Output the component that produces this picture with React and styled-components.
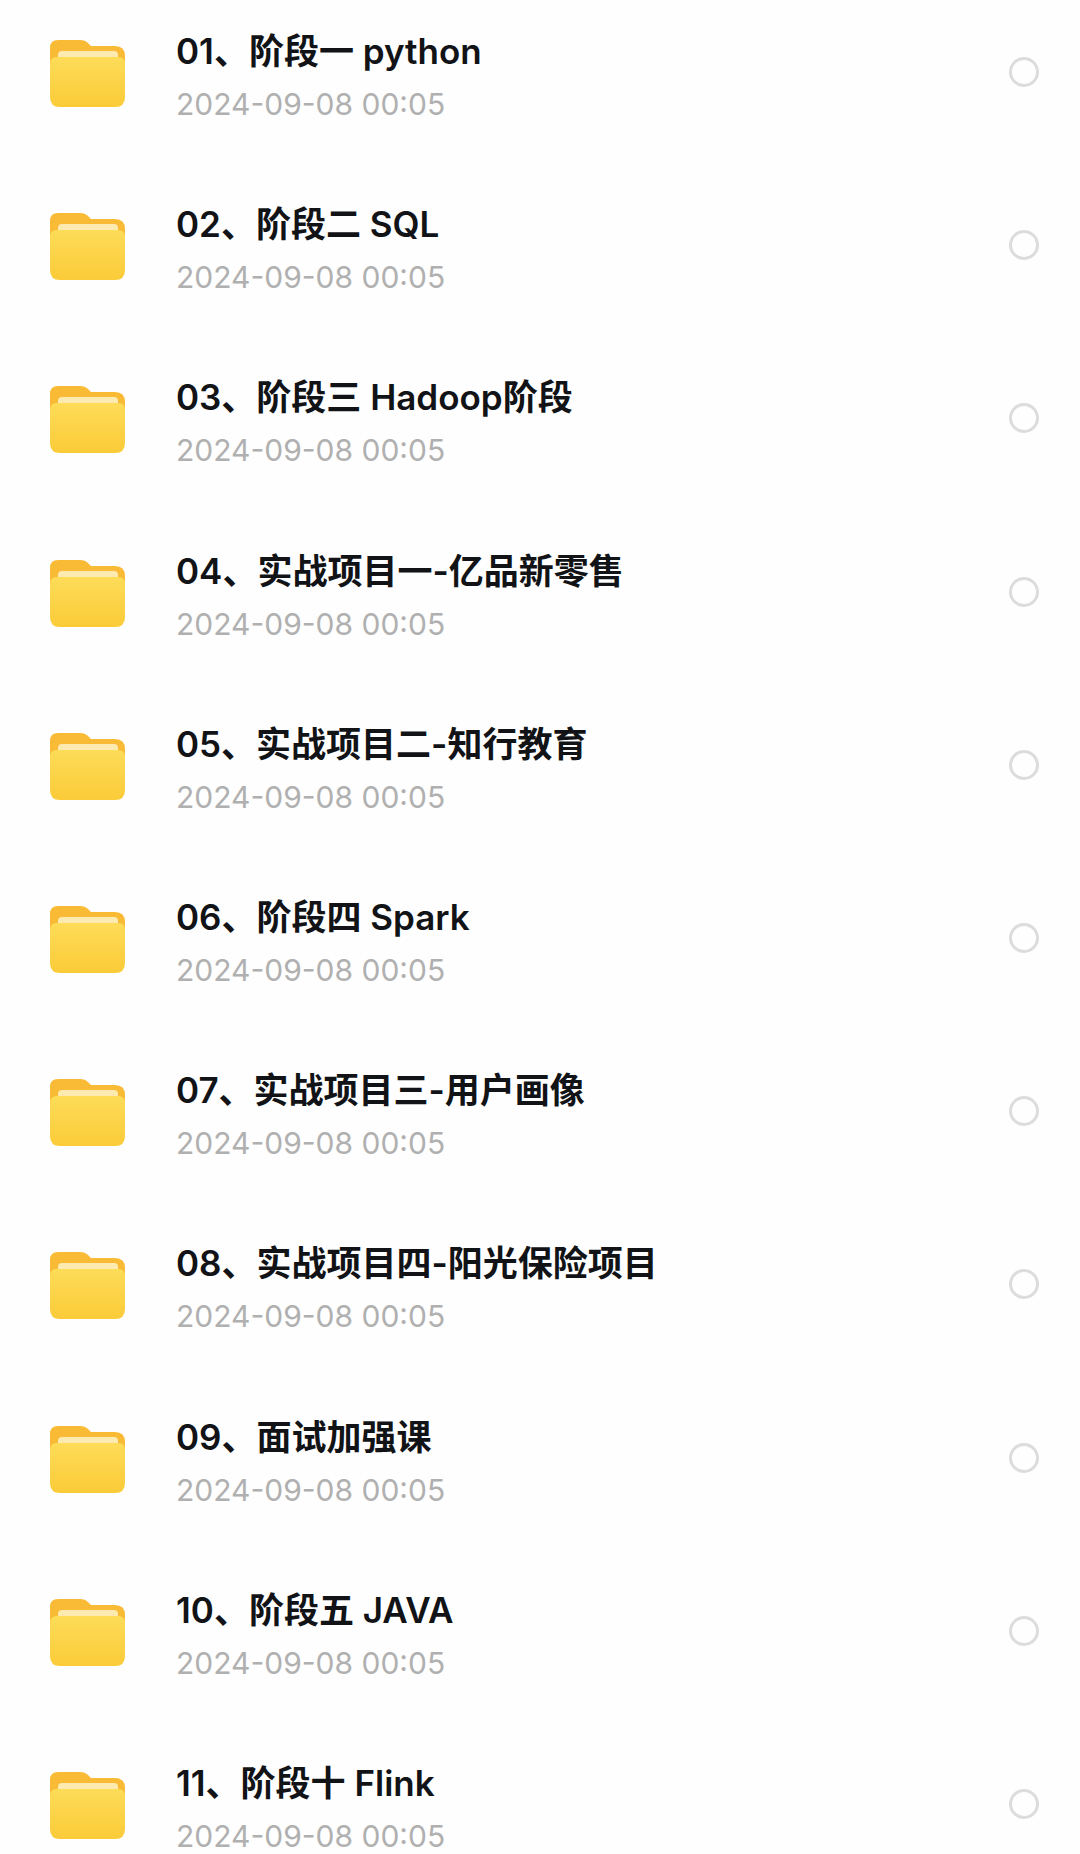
import React from 'react';
import styled, { createGlobalStyle } from 'styled-components';

const GlobalStyle = createGlobalStyle`
  html, body {
    margin: 0;
    padding: 0;
    background: #ffffff;
  }
  body {
    font-family: "Inter", "Noto Sans CJK SC", sans-serif;
    overflow: hidden;
  }
`;

const List = styled.div`
  width: 1080px;
  height: 1854px;
  overflow: hidden;
  background: #fefefe;
`;

const Row = styled.div`
  height: 173.2px;
  display: flex;
  align-items: flex-start;
  box-sizing: border-box;
  padding: 30px 41px 0 50px;
`;

const FolderBox = styled.div`
  width: 75px;
  height: 68px;
  margin-top: 10px;
  flex: none;
  filter: blur(0.6px);
`;

const Info = styled.div`
  flex: 1;
  margin-left: 51px;
  display: flex;
  flex-direction: column;
  gap: 13px;
`;

const Title = styled.div`
  font-family: "Inter", "Noto Sans CJK SC", sans-serif;
  font-size: 35px;
  line-height: 42px;
  font-weight: 600;
  color: #111316;
  white-space: nowrap;
`;

const Time = styled.div`
  font-family: "Inter", sans-serif;
  font-size: 30px;
  line-height: 38px;
  color: #b0b0b0;
  white-space: nowrap;
`;

const Radio = styled.div`
  width: 30px;
  height: 30px;
  margin-top: 27px;
  flex: none;
  box-sizing: border-box;
  border: 3px solid #dcdcdc;
  border-radius: 50%;
`;

const rows = [
  '01、阶段一 python',
  '02、阶段二 SQL',
  '03、阶段三 Hadoop阶段',
  '04、实战项目一-亿品新零售',
  '05、实战项目二-知行教育',
  '06、阶段四 Spark',
  '07、实战项目三-用户画像',
  '08、实战项目四-阳光保险项目',
  '09、面试加强课',
  '10、阶段五 JAVA',
  '11、阶段十 Flink',
];

function Folder({ id }) {
  return (
    <svg width="75" height="68" viewBox="0 0 75 68">
      <defs>
        <linearGradient id={id} x1="0" y1="0" x2="0" y2="1">
          <stop offset="0" stopColor="#fddc58" />
          <stop offset="1" stopColor="#fbcb38" />
        </linearGradient>
      </defs>
      <path d="M0 8 Q0 0 8 0 H30 Q35 0 38 3 L41 6 H65 Q75 6 75 16 V40 H0 Z" fill="#f9bb35" />
      <rect x="8" y="11" width="60" height="12" rx="4" fill="#fdeab0" />
      <path d="M0 24 Q0 17 7 17 H68 Q75 17 75 24 V57 Q75 67 65 67 H10 Q0 67 0 57 Z" fill={`url(#${id})`} />
    </svg>
  );
}

export default function App() {
  return (
    <List>
      <GlobalStyle />
      {rows.map((name, i) => (
        <Row key={name}>
          <FolderBox>
            <Folder id={`folder-${i}`} />
          </FolderBox>
          <Info>
            <Title>{name}</Title>
            <Time>2024-09-08 00:05</Time>
          </Info>
          <Radio />
        </Row>
      ))}
    </List>
  );
}
